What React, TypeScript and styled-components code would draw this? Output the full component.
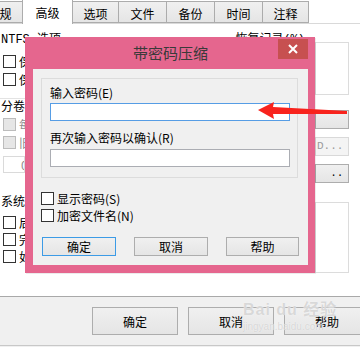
import styled, { createGlobalStyle } from 'styled-components'

const Global = createGlobalStyle`
  html, body {
    margin: 0;
    padding: 0;
    background: #f0f0f0;
  }
  body {
    font-family: "Noto Sans CJK SC", "Liberation Sans", sans-serif;
    font-size: 12px;
    color: #000;
  }
`

const Page = styled.div`
  position: relative;
  width: 360px;
  height: 347px;
  overflow: hidden;
  background: #f0f0f0;
  display: flex;
  flex-direction: column;
`

const TabStrip = styled.div`
  display: flex;
  align-items: flex-end;
  height: 24px;
  margin-left: -24px;
  border-bottom: 1px solid #d9d9d9;
  box-sizing: border-box;
  background: #ffffff;
`

const Tab = styled.div<{ $active?: boolean; $width: number }>`
  box-sizing: border-box;
  width: ${(p) => p.$width}px;
  height: ${(p) => (p.$active ? 25 : 22)}px;
  margin-bottom: ${(p) => (p.$active ? -1 : 0)}px;
  display: flex;
  align-items: center;
  justify-content: center;
  padding-top: ${(p) => (p.$active ? 0 : 2)}px;
  border: 1px solid #acacac;
  border-bottom: ${(p) => (p.$active ? 'none' : '1px solid #acacac')};
  margin-right: -1px;
  background: ${(p) => (p.$active ? '#ffffff' : 'linear-gradient(#f0f0f0, #e5e5e5)')};
  position: relative;
  z-index: ${(p) => (p.$active ? 1 : 0)};
  font-size: 12px;
`

const Panel = styled.div`
  height: 273px;
  box-sizing: border-box;
  background: #ffffff;
  border-bottom: 1px solid #a9a9a9;
  display: flex;
  justify-content: space-between;
  padding: 10px 11px 0 3px;
`

const LeftCol = styled.div`
  width: 22px;
  display: flex;
  flex-direction: column;
`

const RightCol = styled.div`
  width: 120px;
  display: flex;
  flex-direction: column;
  align-items: flex-end;
`

const GroupLabel = styled.div<{ $top?: number; $right?: number }>`
  height: 13px;
  line-height: 13px;
  margin-top: ${(p) => p.$top ?? 0}px;
  margin-left: -2px;
  margin-right: ${(p) => p.$right ?? 0}px;
  white-space: nowrap;
  font-family: "Liberation Mono", "Noto Sans CJK SC", monospace;
  font-size: 12px;
`

const Separator = styled.div<{ $top: number }>`
  height: 1px;
  width: 30px;
  background: #e3e3e3;
  margin: ${(p) => p.$top}px 0 0 -3px;
`

const CheckRow = styled.div<{ $top: number }>`
  display: flex;
  align-items: center;
  gap: 3px;
  margin-top: ${(p) => p.$top}px;
  height: 13px;
`

const BgRow = styled(CheckRow)`
  overflow: hidden;
`

const Box = styled.span<{ $disabled?: boolean }>`
  box-sizing: border-box;
  width: 13px;
  height: 13px;
  flex: none;
  border: 1px solid ${(p) => (p.$disabled ? '#bcbcbc' : '#333333')};
  background: ${(p) => (p.$disabled ? '#e6e6e6' : '#ffffff')};
`

const RowText = styled.span<{ $disabled?: boolean }>`
  color: ${(p) => (p.$disabled ? '#8d8d8d' : '#000')};
  white-space: nowrap;
  line-height: 13px;
`

const Combo = styled.div`
  margin-top: 7px;
  height: 17px;
  box-sizing: border-box;
  border: 1px solid #dadada;
  color: #8d8d8d;
  padding-left: 17px;
  line-height: 15px;
  overflow: hidden;
`

const Frame = styled.div<{ $top: number; $height: number }>`
  box-sizing: border-box;
  width: 34px;
  height: ${(p) => p.$height}px;
  margin-top: ${(p) => p.$top}px;
  border: 1px solid #dcdcdc;
`

const SideButton = styled.div<{ $top: number; $disabled?: boolean }>`
  box-sizing: border-box;
  width: 34px;
  height: 19px;
  margin-top: ${(p) => p.$top}px;
  border: 1px solid ${(p) => (p.$disabled ? '#d9d9d9' : '#adadad')};
  background: ${(p) => (p.$disabled ? '#f4f4f4' : 'linear-gradient(#f0f0f0, #e5e5e5)')};
  color: ${(p) => (p.$disabled ? '#9a9a9a' : '#000')};
  font-family: "Liberation Mono", monospace;
  font-size: 11px;
  line-height: 17px;
  white-space: nowrap;
  overflow: hidden;
  padding-left: 1px;
`

const Footer = styled.div`
  flex: 1;
  display: flex;
  gap: 10px;
  padding: 10px 0 0 92px;
  border-bottom: 1px solid #c8c8c8;
  margin-bottom: 1px;
`

const Button = styled.div<{ $w: number; $h: number; $primary?: boolean }>`
  box-sizing: border-box;
  flex: none;
  width: ${(p) => p.$w}px;
  height: ${(p) => p.$h}px;
  border: 1px solid ${(p) => (p.$primary ? '#3c9be6' : '#adadad')};
  background: linear-gradient(#f0f0f0, #e5e5e5);
  display: flex;
  align-items: center;
  justify-content: center;
  font-size: 12px;
`

const Dialog = styled.div`
  position: absolute;
  left: 25px;
  top: 37px;
  width: 290px;
  height: 236px;
  box-sizing: border-box;
  background: #e5668e;
  padding: 0 7px 8px 8px;
  display: flex;
  flex-direction: column;
  box-shadow: 1px 1px 0 rgba(0, 0, 0, 0.08);
`

const TitleBar = styled.div`
  height: 32px;
  position: relative;
  display: flex;
  align-items: center;
  justify-content: center;
  font-size: 15px;
  color: #3a3a3a;
  padding-bottom: 2px;
  box-sizing: border-box;
`

const CloseButton = styled.div`
  position: absolute;
  right: 0;
  top: 2px;
  width: 30px;
  height: 20px;
  background: #c75050;
  display: flex;
  align-items: center;
  justify-content: center;
`

const Client = styled.div`
  flex: 1;
  background: #f0f0f0;
  padding: 9px 10px 0 8px;
  display: flex;
  flex-direction: column;
`

const InnerGroup = styled.div`
  box-sizing: border-box;
  height: 100px;
  border: 1px solid #dcdcdc;
  padding: 7px 7px 0 8px;
  display: flex;
  flex-direction: column;
`

const FieldLabel = styled.div<{ $top?: number }>`
  height: 13px;
  line-height: 13px;
  margin-top: ${(p) => p.$top ?? 0}px;
  white-space: nowrap;
`

const Input = styled.div<{ $focused?: boolean }>`
  box-sizing: border-box;
  width: 240px;
  height: 18px;
  margin-top: ${(p) => (p.$focused ? 4 : 5)}px;
  background: #ffffff;
  border: 1px solid ${(p) => (p.$focused ? '#569de5' : '#abadb3')};
`

const DialogButtons = styled.div`
  display: flex;
  gap: 18px;
  margin-top: 15px;
  margin-left: 1px;
`

const Arrow = styled.svg`
  position: absolute;
  left: 255px;
  top: 100px;
`

const Watermark = styled.div`
  position: absolute;
  left: 243px;
  top: 301px;
  color: rgba(200, 200, 200, 0.7);
  text-shadow: 0 0 1px #ffffff;
  font-family: "Liberation Sans", "Noto Sans CJK SC", sans-serif;
  pointer-events: none;
`

const MarkTop = styled.div`
  font-size: 16px;
  font-weight: bold;
  line-height: 18px;
  letter-spacing: 1px;
`

const MarkBottom = styled.div`
  font-size: 10px;
  line-height: 12px;
  margin-top: 2px;
`

const tabs = [
  { label: '常规', width: 47 },
  { label: '高级', width: 51, active: true },
  { label: '选项', width: 47 },
  { label: '文件', width: 49 },
  { label: '备份', width: 49 },
  { label: '时间', width: 49 },
  { label: '注释', width: 47 },
]

export default function App() {
  return (
    <>
      <Global />
      <Page>
        <TabStrip>
          {tabs.map((t) => (
            <Tab key={t.label} $active={t.active} $width={t.width}>
              {t.label}
            </Tab>
          ))}
        </TabStrip>
        <Panel>
          <LeftCol>
            <GroupLabel>NTFS 选项</GroupLabel>
            <BgRow $top={8}>
              <Box />
              <RowText>保存文件安全数据</RowText>
            </BgRow>
            <BgRow $top={5}>
              <Box />
              <RowText>保存文件流数据</RowText>
            </BgRow>
            <Separator $top={12} />
            <GroupLabel $top={3}>分卷</GroupLabel>
            <BgRow $top={3}>
              <Box $disabled />
              <RowText $disabled>每一个分卷后暂停</RowText>
            </BgRow>
            <BgRow $top={5}>
              <Box $disabled />
              <RowText $disabled>旧样式分卷名</RowText>
            </BgRow>
            <Combo>0</Combo>
            <GroupLabel $top={24}>系统</GroupLabel>
            <BgRow $top={6}>
              <Box />
              <RowText>后台压缩</RowText>
            </BgRow>
            <BgRow $top={4}>
              <Box />
              <RowText>完成操作后关闭计算机电源</RowText>
            </BgRow>
            <BgRow $top={4}>
              <Box />
              <RowText>如果其他副本被激活则等待</RowText>
            </BgRow>
          </LeftCol>
          <RightCol>
            <GroupLabel $right={44}>恢复记录(%)</GroupLabel>
            <Frame $top={-5} $height={53} />
            <SideButton $top={15} />
            <SideButton $top={8} $disabled>D...</SideButton>
            <SideButton $top={8}>&nbsp;&nbsp;..</SideButton>
            <Frame $top={19} $height={71} />
          </RightCol>
        </Panel>
        <Footer>
          <Button $w={86} $h={28}>确定</Button>
          <Button $w={86} $h={28}>取消</Button>
          <Button $w={86} $h={28}>帮助</Button>
        </Footer>

        <Watermark>
          <MarkTop>Bai du 经验</MarkTop>
          <MarkBottom>jingyan.baidu.com</MarkBottom>
        </Watermark>

        <Dialog>
          <TitleBar>
            带密码压缩
            <CloseButton>
              <svg width="10" height="10" viewBox="0 0 10 10">
                <path d="M1 1 L9 9 M9 1 L1 9" stroke="#ffffff" strokeWidth="2" />
              </svg>
            </CloseButton>
          </TitleBar>
          <Client>
            <InnerGroup>
              <FieldLabel>输入密码(E)</FieldLabel>
              <Input $focused />
              <FieldLabel $top={10}>再次输入密码以确认(R)</FieldLabel>
              <Input />
            </InnerGroup>
            <CheckRow $top={14}>
              <Box />
              <RowText>显示密码(S)</RowText>
            </CheckRow>
            <CheckRow $top={4}>
              <Box />
              <RowText>加密文件名(N)</RowText>
            </CheckRow>
            <DialogButtons>
              <Button $w={74} $h={19} $primary>确定</Button>
              <Button $w={74} $h={19}>取消</Button>
              <Button $w={73} $h={19}>帮助</Button>
            </DialogButtons>
          </Client>
        </Dialog>

        <Arrow width="96" height="24" viewBox="0 0 96 24">
          <path d="M3 10 L19 2 L18 7 L92 11 L92 14 L18 14 L19 19 Z" fill="#f8231d" />
        </Arrow>
      </Page>
    </>
  )
}
